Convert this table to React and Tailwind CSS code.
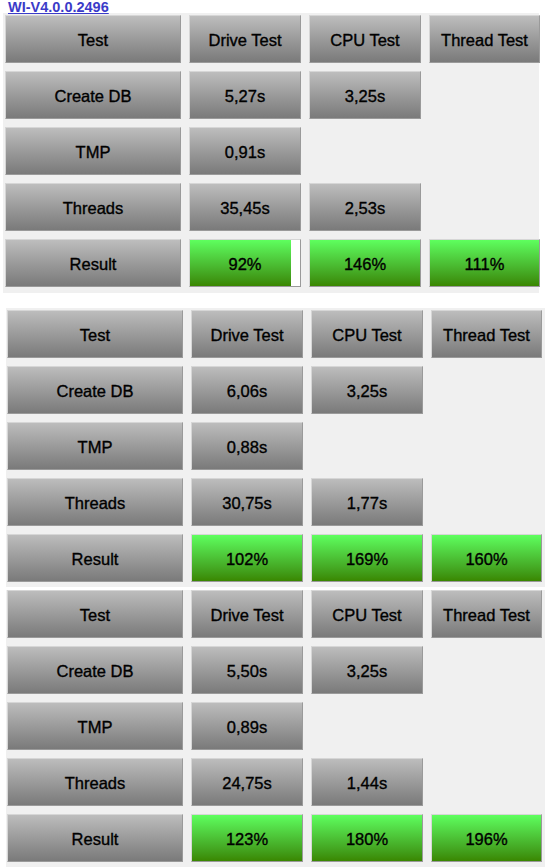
import React from 'react';

const panels = [
  {
    create: ['5,27s', '3,25s'],
    tmp: ['0,91s'],
    threads: ['35,45s', '2,53s'],
    result: [92, 146, 111],
  },
  {
    create: ['6,06s', '3,25s'],
    tmp: ['0,88s'],
    threads: ['30,75s', '1,77s'],
    result: [102, 169, 160],
  },
  {
    create: ['5,50s', '3,25s'],
    tmp: ['0,89s'],
    threads: ['24,75s', '1,44s'],
    result: [123, 180, 196],
  },
];

const label = 'pt-[3px] text-[16.5px] text-black [-webkit-text-stroke:0.35px_black]';

function Cell({ children }) {
  return (
    <div className={`h-[48px] flex items-center justify-center border border-t-[#d6d6d6] border-l-[#d6d6d6] border-r-[#9a9a9a] border-b-[#9a9a9a] bg-gradient-to-b from-[#bdbdbd] to-[#7a7a7a] ${label}`}>
      {children}
    </div>
  );
}

function Bar({ value }) {
  const fill = Math.min(value, 100);
  return (
    <div className="relative h-[48px] border border-t-[#d6d6d6] border-l-[#d6d6d6] border-r-[#9a9a9a] border-b-[#9a9a9a] bg-white">
      <div
        className="absolute inset-y-0 left-0 bg-gradient-to-b from-[#5eff5e] to-[#3a8700]"
        style={{ width: `${fill}%` }}
      />
      <div className={`relative h-full flex items-center justify-center ${label}`}>
        {value}%
      </div>
    </div>
  );
}

function Panel({ data, className }) {
  return (
    <div className={`bg-[#f0f0f0] ${className}`}>
      <div className="grid grid-cols-[176px_112px_112px_111px] gap-x-[8px] gap-y-[8px]">
        <Cell>Test</Cell>
        <Cell>Drive Test</Cell>
        <Cell>CPU Test</Cell>
        <Cell>Thread Test</Cell>

        <Cell>Create DB</Cell>
        <Cell>{data.create[0]}</Cell>
        <Cell>{data.create[1]}</Cell>
        <div />

        <Cell>TMP</Cell>
        <Cell>{data.tmp[0]}</Cell>
        <div />
        <div />

        <Cell>Threads</Cell>
        <Cell>{data.threads[0]}</Cell>
        <Cell>{data.threads[1]}</Cell>
        <div />

        <Cell>Result</Cell>
        <Bar value={data.result[0]} />
        <Bar value={data.result[1]} />
        <Bar value={data.result[2]} />
      </div>
    </div>
  );
}

export default function App() {
  return (
    <div className="w-[545px] h-[867px] overflow-hidden bg-white" style={{ fontFamily: '"Liberation Sans", Arial, sans-serif' }}>
      <div className="h-[13px] pl-[8px] leading-[13px]">
        <a href="#" className="text-[14.5px] font-bold text-[#3b3bc8] underline">WI-V4.0.0.2496</a>
      </div>
      <Panel data={panels[0]} className="ml-[3px] w-[536px] pt-[2px] pl-[2px] pb-[6px]" />
      <Panel data={panels[1]} className="mt-[15px] ml-[6px] w-[539px] pt-[2px] pl-[1px] pb-[5px]" />
      <Panel data={panels[2]} className="mt-[3px] ml-[6px] w-[539px] pl-[1px] pb-[5px]" />
    </div>
  );
}
